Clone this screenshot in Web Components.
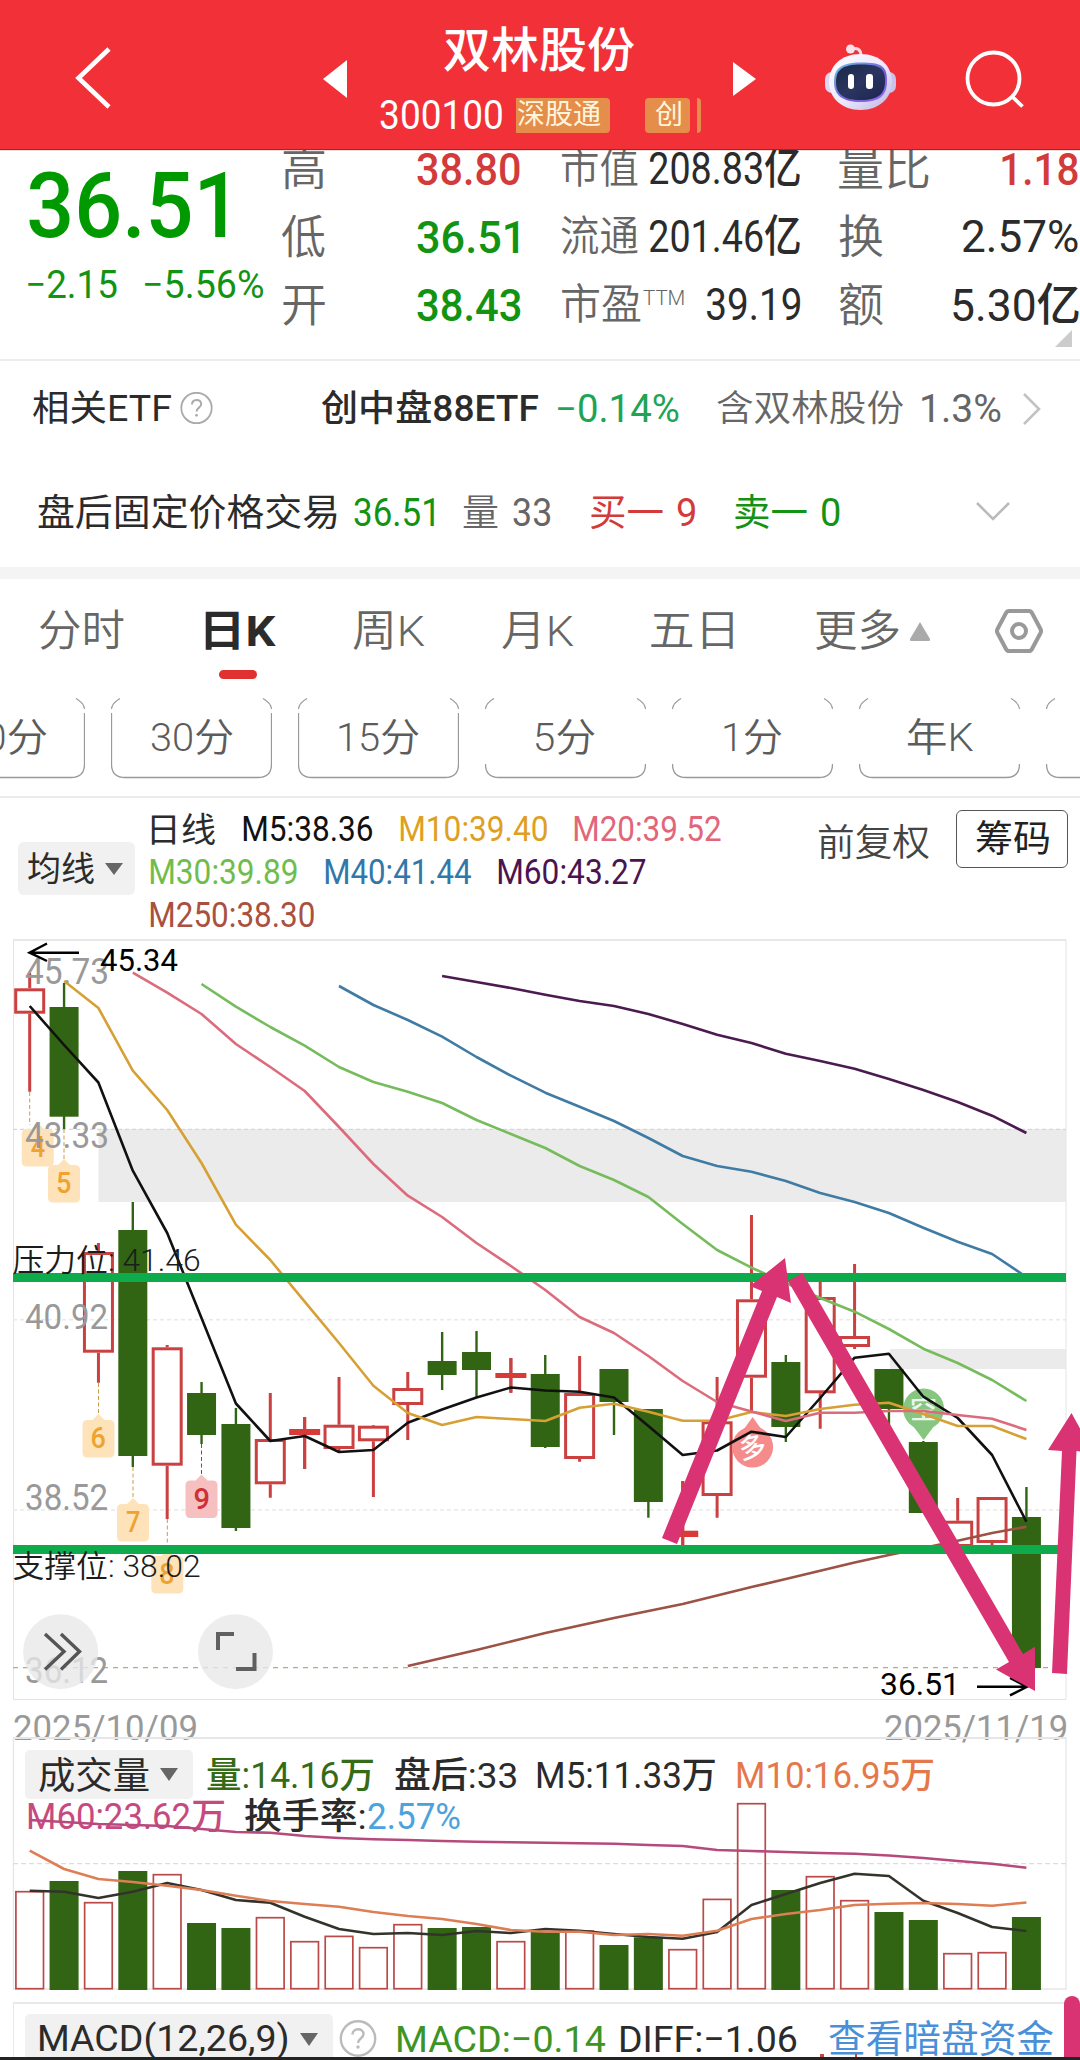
<!DOCTYPE html>
<html lang="zh-CN">
<head>
<meta charset="utf-8">
<title>双林股份 300100</title>
<style>
html,body{margin:0;padding:0;background:#fff}
body{width:1080px;height:2060px;overflow:hidden;font-family:Roboto,"Noto Sans CJK SC",sans-serif;color:#333}
</style>
</head>
<body>
<stock-page></stock-page>
<script>
const FAMILY = 'Roboto,"Noto Sans CJK SC",sans-serif';
const pen = document.createElement('canvas').getContext('2d');
// Ink bounds of a string, used to fit labels to their column widths.
function ink(text, size, weight) {
  pen.font = `${weight} ${size}px ${FAMILY}`;
  const m = pen.measureText(text);
  return { left: -m.actualBoundingBoxLeft, width: m.actualBoundingBoxRight + m.actualBoundingBoxLeft };
}
function define(name, build) {
  customElements.define(name, class extends HTMLElement {
    connectedCallback() {
      if (this.shadowRoot) return;
      this.attachShadow({ mode: 'open' }).innerHTML = build(this);
    }
  });
}

define('fit-text', el => {
  const text = el.getAttribute('text'), size = +el.getAttribute('size'), weight = +el.getAttribute('weight') || 400;
  const w = +el.getAttribute('w'), b = ink(text, size, weight), s = w / b.width;
  return `<style>:host{display:block;flex:none;width:${w}px;height:${size}px;white-space:pre}
  span{display:block;width:max-content;font:${weight} ${size}px/${size}px ${FAMILY};transform-origin:0 0;transform:translateX(${-b.left * s}px) scaleX(${s})}</style><span>${text}</span>`;
});
const tx = (x1, x2, size, color, text, weight = 400, extra = '') =>
  ({ x: x1, w: x2 - x1, html: `<fit-text text="${text}" size="${size}" weight="${weight}" w="${x2 - x1}" style="color:${color};${extra}"></fit-text>` });
const ic = (x1, x2, html) => ({ x: x1, w: x2 - x1, html });
// A flex line whose items are spaced by margins from one to the next.
function row(height, items, start = 0, extra = '') {
  let end = start;
  return `<div style="display:flex;align-items:center;height:${height}px;${extra}">` + items.map(i => {
    const g = i.x - end; end = i.x + i.w;
    return `<div style="flex:none;width:${i.w}px;margin-left:${g}px">${i.html}</div>`;
  }).join('') + '</div>';
}

define('app-header', () => `<style>
:host{display:flex;box-sizing:border-box;height:149px;padding-top:8px;align-items:center;background:#f13038;position:relative;z-index:1;box-shadow:0 1px 1px #8a3034}
svg{display:block;flex:none}
.mid{align-self:stretch;width:321px;margin:0 32px 0 33px}
.name{margin:19px 0 0 64px}
.code{display:flex;height:36px;align-items:center;margin-top:22px}
.tag{display:flex;align-items:center;height:35px;background:#e58d4a;border-radius:0 4px 4px 0}
</style>
<svg style="margin-left:70px" width="46" height="66" viewBox="0 0 46 66"><path d="M39 3 8.5 32 39 61" fill="none" stroke="#fff" stroke-width="4.6"/></svg>
<svg style="margin-left:207px" width="24" height="38" viewBox="0 0 24 38"><path d="M24 0v38L0 19z" fill="#fff"/></svg>
<div class="mid"><div class="name">${tx(444, 634, 48, '#fff', '双林股份', 500).html}</div>
<div class="code">${tx(380, 502, 41, '#fff', '300100', 450).html}
<div class="tag" style="width:92px;margin-left:14px;padding-left:2px">${tx(518, 601, 28, '#fff5dd', '深股通').html}</div>
<div class="tag" style="width:35px;margin-left:35px;padding-left:10px;border-radius:4px">${tx(655, 681, 27, '#fff5dd', '创').html}</div>
<div class="tag" style="width:4px;margin-left:7px"></div></div></div>
<svg width="23" height="34" viewBox="0 0 23 34"><path d="M0 0v34l23-17z" fill="#fff"/></svg>
<svg style="margin-left:68px" width="74" height="70" viewBox="0 0 74 70">
<defs><linearGradient id="s" x1="0" y1="0" x2="1" y2="1"><stop offset="0" stop-color="#fff"/><stop offset=".55" stop-color="#ece7fb"/><stop offset="1" stop-color="#b9b4e2"/></linearGradient>
<linearGradient id="r" x1="0" y1="0" x2="1" y2="1"><stop offset="0" stop-color="#6fc3e8"/><stop offset=".6" stop-color="#7457d8"/><stop offset="1" stop-color="#9a6ff0"/></linearGradient>
<linearGradient id="v" x1="0" y1="0" x2="1" y2="1"><stop offset="0" stop-color="#1b2a48"/><stop offset=".5" stop-color="#2a3560"/><stop offset="1" stop-color="#1b2550"/></linearGradient></defs>
<rect x="1" y="28" width="14" height="21" rx="7" fill="#ddd6f3"/><rect x="58" y="28" width="14" height="21" rx="7" fill="#c9c3ea"/>
<path d="M27 5c7-2 10 1 10 7" fill="none" stroke="#f6d9e3" stroke-width="3"/><circle cx="26.500" cy="5" r="4.500" fill="#fbe2ea"/>
<path d="M36.500 10C56 10 68 22 68 38S55 66 36.500 66 5 54 5 38 17 10 36.500 10z" fill="url(#s)"/>
<path d="M37 18.500c21 0 26 4 26 18.500s-7 21-26 21-27-7-27-20 6-19.500 27-19.500z" fill="url(#r)"/>
<path d="M37 20.500c19 0 24 4 24 16.500s-6 19-24 19-25-6-25-18 6-17.500 25-17.500z" fill="url(#v)"/>
<rect x="24" y="30" width="6" height="15" rx="3" fill="#fff"/><rect x="42" y="30" width="7" height="15" rx="3" fill="#fff"/></svg>
<svg style="margin:2px 0 0 66px" width="60" height="60" viewBox="0 0 60 60"><circle cx="29.500" cy="28.500" r="26" fill="none" stroke="#fff" stroke-width="3.800"/><path d="M47.500 46l11 10.500" stroke="#fff" stroke-width="3.800"/></svg>`);

const G = '#129312', R = '#d33a3a', L = '#666', D = '#2b2b2b';
define('quote-panel', () => `<style>
:host{display:flex;box-sizing:border-box;height:212px;border-bottom:2px solid #ececec;overflow:visible}
.px{width:253px;flex:none;padding:12px 0 0 29px}
.grid{margin-top:-14px;flex:1}
.more{position:absolute;left:1055px;top:330px}
</style>
<div class="px">${tx(29, 226, 91, '#009a00', '36.51', 500).html}<div style="height:14px"></div>${row(39, [tx(28, 117, 39, G, '−2.15', 450), tx(145, 263, 39, G, '−5.56%', 450)], 29)}</div>
<div class="grid">
${row(68, [tx(283, 325, 46, L, '高', 350), tx(417, 520, 45, R, '38.80', 500), tx(562, 638, 42, L, '市值', 350), tx(650, 800, 44, D, '208.83亿', 450), tx(839, 929, 46, L, '量比', 350), tx(1002, 1078, 45, R, '1.18', 500)], 282)}
${row(68, [tx(282, 325, 46, L, '低', 350), tx(417, 518, 45, G, '36.51', 500), tx(561, 638, 42, L, '流通', 350), tx(650, 800, 44, D, '201.46亿', 450), tx(839, 883, 46, L, '换', 350), tx(963, 1078, 44, D, '2.57%', 450)], 282)}
${row(68, [tx(283, 325, 46, L, '开', 350), tx(417, 521, 45, G, '38.43', 500), tx(562, 641, 42, L, '市盈', 350), tx(643, 684, 20, L, 'TTM', 350, 'margin-top:-14px'), tx(707, 800, 44, D, '39.19', 450), tx(839, 883, 46, L, '额', 350), tx(953, 1079, 45, D, '5.30亿', 450)], 282)}
</div>
<svg class="more" width="17" height="17"><path d="M17 0v17H0z" fill="#ccc"/></svg>`);

define('info-rows', () => `<style>:host{display:block;border-bottom:12px solid #f4f4f4}svg{display:block}</style>
${row(95, [tx(33, 171, 36, D, '相关ETF'), ic(180, 213, '<svg width="33" height="34" viewBox="0 0 33 34"><circle cx="16.500" cy="16" r="15.200" fill="none" stroke="#aaa" stroke-width="1.800"/><path d="M12 12.500c0-6 9.200-6 9.200-.6 0 3.800-4.600 3.700-4.600 7.600" fill="none" stroke="#aaa" stroke-width="2"/><circle cx="16.500" cy="23.300" r="1.400" fill="#aaa"/></svg>'),
 tx(321, 538, 36, D, '创中盘88ETF', 500), tx(558, 679, 38, '#1fa355', '−0.14%'), tx(717, 903, 36, L, '含双林股份', 350), tx(922, 1001, 38, L, '1.3%'), ic(1021, 1042, '<svg width="21" height="34"><path d="M3 2l15 15L3 32" fill="none" stroke="#c2c2c2" stroke-width="2.600"/></svg>')])}
${row(108, [tx(38, 337, 37, D, '盘后固定价格交易'), tx(354, 434, 38, G, '36.51', 450), tx(463, 498, 37, L, '量', 350), tx(513, 550, 38, L, '33'), tx(590, 663, 37, R, '买一'), tx(677, 695, 38, R, '9', 450), tx(735, 807, 37, G, '卖一'), tx(822, 840, 38, G, '0', 450), ic(975, 1011, '<svg width="36" height="22"><path d="M2 1l16 16L34 1" fill="none" stroke="#bbb" stroke-width="2.600"/></svg>')], 0, 'padding-top:3px')}`);

define('period-tabs', () => `<style>:host{display:block}svg{display:block}.bar{width:38px;height:9px;border-radius:5px;background:#e03030;margin:-10px 0 0 219px}</style>
${row(98, [tx(39, 124, 43, L, '分时', 350), tx(205, 276, 43, D, '日K', 700), tx(353, 425, 43, L, '周K', 350), tx(502, 574, 43, L, '月K', 350), tx(651, 733, 43, L, '五日', 350), tx(816, 899, 43, L, '更多', 350),
 ic(909, 931, '<svg width="22" height="19"><path d="M11 0l10 17q.5 2-1 2H2q-1.500 0-1-2z" fill="#aaa"/></svg>'),
 ic(995, 1043, '<svg width="48" height="46" viewBox="0 0 48 46"><path d="M14 3h20q2 0 3 2l8.500 16q1 2 0 4L37 41q-1 2-3 2H14q-2 0-3-2L2.500 25q-1-2 0-4L11 5q1-2 3-2z" fill="none" stroke="#999" stroke-width="4"/><circle cx="24" cy="23" r="7" fill="none" stroke="#999" stroke-width="4"/></svg>')], 0, 'padding-top:3px')}
<div class="bar"></div>`);

define('period-chip', el => {
  const open = el.hasAttribute('open'), side = open ? '' : 'M.5 15V66M160.500 15V66';
  const t = el.getAttribute('text');
  return `<style>:host{position:relative;display:flex;flex:none;width:161px;height:80px;align-items:center;justify-content:center}svg{position:absolute;left:0;top:0}</style>
  <svg width="161" height="81"><g fill="none" stroke="#999"><path d="M.5 66Q.5 79.500 14 79.500H147Q160.500 79.500 160.500 66${side}" stroke-width="1.300"/><path d="M.5 11Q1 5 9 .5M152 .5Q160 5 160.500 11" stroke-width="1.100"/></g></svg>
  ${t ? `<fit-text text="${t}" size="39" weight="350" w="${el.getAttribute('w')}" style="color:#5c5c5c"></fit-text>` : ''}`;
});
define('chip-strip', () => `<style>:host{display:flex;gap:26px;height:98px;padding-top:19px;margin-left:-76px;width:1156px;overflow:hidden;border-bottom:2px solid #ebebeb}</style>
<period-chip text="60分" w="84"></period-chip><period-chip text="30分" w="82"></period-chip><period-chip text="15分" w="80"></period-chip><period-chip text="5分" w="59" open></period-chip><period-chip text="1分" w="58" open></period-chip><period-chip text="年K" w="66" open></period-chip><period-chip open></period-chip>`);

define('ma-legend', () => `<style>:host{display:flex;height:132px;width:1080px}
.pill{display:flex;box-sizing:border-box;width:117px;height:53px;margin:44px 0 0 18px;padding-left:10px;align-items:center;background:#f1f1f1;border-radius:6px}
.pill svg{margin-left:11px}
.rows{width:669px;margin-left:15px;padding-top:10px}
.box{display:flex;box-sizing:border-box;width:112px;height:58px;border:1.500px solid #555;border-radius:6px;align-items:center;justify-content:center;margin:12px 0 0 27px}</style>
<div class="pill">${tx(28, 94, 34, D, '均线').html}<svg width="18" height="12"><path d="M0 0h18L9 12z" fill="#666"/></svg></div>
<div class="rows">
${row(43, [tx(151, 215, 34, D, '日线'), tx(243, 372, 35, '#111', 'M5:38.36', 450), tx(400, 547, 35, '#dea01f', 'M10:39.40', 450), tx(574, 721, 35, '#e2667a', 'M20:39.52', 450)], 150)}
${row(43, [tx(150, 297, 35, '#6fbd4c', 'M30:39.89', 450), tx(325, 471, 35, '#3178a8', 'M40:41.44', 450), tx(498, 646, 35, '#4a1450', 'M60:43.27', 450)], 150)}
${row(43, [tx(150, 314, 35, '#a95140', 'M250:38.30', 450)], 150)}</div>
<div style="margin-top:27px">${tx(819, 929, 37, '#444', '前复权', 350).html}</div>
<div class="box">${tx(975, 1048, 37, '#222', '筹码').html}</div>`);

const cx = i => 29.7 + 34.37 * i;
const label = (x1, x2, y, size, fill, text, weight = 400) => {
  const b = ink(text, size, weight), s = (x2 - x1) / b.width;
  return `<text transform="translate(${x1 - b.left * s} ${y}) scale(${s} 1)" font-size="${size}" font-weight="${weight}" fill="${fill}">${text}</text>`;
};
const line = (color, from, ys, w = 2.6) => `<polyline fill="none" stroke="${color}" stroke-width="${w}" stroke-linejoin="round" points="${ys.map((y, k) => cx(from + k).toFixed(1) + ',' + y).join(' ')}"/>`;
const dash = (y, c, p, w = 1.6) => `<path d="M13 ${y}H1066" stroke="${c}" stroke-width="${w}" stroke-dasharray="${p}"/>`;
const RED = '#cb4040', GREEN = '#316514';

define('price-chart', () => {
  // [up?, high, body top, body bottom, low]
  const K = [[1,973,988.3,1013.7,1091.7],[0,983,1007,1116.7,1129],[1,1243,1252,1352.7,1382.7],[0,1202,1230,1456,1467],[1,1345,1347.3,1465.7,1519],[0,1382,1393,1435,1444],[0,1408,1424,1528,1531],[1,1393,1439,1484.3,1497.7],[1,1417,1429,1435,1469],[1,1377,1424.7,1449,1451.7],[1,1425,1425.7,1441.3,1497],[1,1372,1388,1405,1440],[0,1332,1361,1375,1390],[0,1331,1352,1370,1397],[1,1358,1373,1378,1392.7],[0,1355,1374,1447,1448],[1,1356,1393,1459,1461.7],[0,1369,1369,1402,1435],[0,1409,1409,1502,1517.7],[1,1481,1530.7,1537,1546],[1,1377,1421.3,1496,1517.7],[1,1215,1299.3,1377.7,1412],[0,1355,1362,1427,1442],[1,1276,1297,1393.3,1428.7],[1,1264,1336,1347,1349],[0,1369,1369,1409,1450],[0,1441,1442,1513,1513],[1,1498,1520.7,1547,1549],[1,1497,1497,1543,1546],[0,1487,1517,1668,1668]];
  const candles = K.map(([up, h, t, b, l], i) => {
    const x = cx(i);
    if (!up) return `<path d="M${x} ${h}V${l}" stroke="${GREEN}" stroke-width="2.400"/><rect x="${x - 14.5}" y="${t}" width="29" height="${b - t}" fill="${GREEN}"/>`;
    const wick = `<path d="M${x} ${h}V${t}M${x} ${b}V${l}" stroke="${RED}" stroke-width="3"/>`;
    return b - t < 8 ? wick + `<path d="M${x} ${h}V${l}" stroke="${RED}" stroke-width="3"/><rect x="${x - 15.5}" y="${t}" width="31" height="${b - t}" fill="#d83a38"/>` : wick + `<rect x="${x - 14}" y="${t + 1.5}" width="28" height="${b - t - 3}" fill="none" stroke="${RED}" stroke-width="3"/>`;
  }).join('');
  const tag = (x, y, n, fill, ink2, from, dx = 0) => `<path d="M${x} ${from}V${y - 4}" stroke="${n == 9 ? '#a04040' : '#c79d4c'}" stroke-width="1" stroke-dasharray="4 2.500"/><path d="M${x + dx} ${y - 6}l6 6h5q5 0 5 5v27.500q0 5-5 5h-22q-5 0-5-5V${y + 5}q0-5 5-5h5z" fill="${fill}"/>${label(x + dx - 7, x + dx + 7, y + 28, 29, ink2, n, 500)}`;
  const O = '#fee3ba', OT = '#eea230', A = '#999';
  return `<style>:host{display:block;height:808px}svg{display:block;overflow:visible}text{font-family:${FAMILY}}</style>
<svg width="1080" height="808" viewBox="0 930 1080 808">
<rect x="98.500" y="1129" width="967.500" height="73" fill="#ebebeb"/><rect x="890" y="1349" width="176" height="20" fill="#ebebeb"/>
<path d="M13 940H1066" stroke="#e8e8e8" stroke-width="2"/><path d="M13.500 940V1699.500H1066V940" fill="none" stroke="#e4e4e4"/>
${dash(1129.3, '#d6d6d6', '4 3', 1.2)}${dash(1319.7, '#e9e9e9', '4 3')}${dash(1510, '#e9e9e9', '4 3')}${dash(1667.7, '#c0a678', '5 5', 1.3)}
${tag(29.7, 1129, '4', O, OT, 1092, 8)}${tag(64, 1165, '5', O, OT, 1129)}${tag(98.5, 1420, '6', O, OT, 1383)}${tag(133, 1504, '7', O, OT, 1467)}${tag(167.3, 1556, '8', O, OT, 1519)}${tag(201.5, 1480.5, '9', '#f6bfc0', '#cf3036', 1444)}
${candles}
${label(25, 107, 983.5, 36, A, '45.73', 450)}${label(25, 107, 1147.7, 36, A, '43.33', 450)}${label(25, 107, 1329, 36, A, '40.92', 450)}${label(26, 107, 1510, 36, A, '38.52', 450)}${label(26, 107, 1682.7, 36, A, '36.12', 450)}
<circle cx="752.600" cy="1447" r="20.500" fill="#f58b8a"/><path d="M744 1429l8.600-12 8.600 12z" fill="#f58b8a"/><g transform="rotate(-12 752 1447)">${label(740, 765, 1457, 27, '#fff', '多', 500)}</g>
<circle cx="923.600" cy="1409" r="20.500" fill="#86c680"/><path d="M913 1426l10.600 14 10.600-14z" fill="#86c680"/><g opacity=".85">${label(911, 936, 1419, 27, '#fff', '空', 500)}</g>
${line('#4b1a4f', 12, [976,982,988,994.7,1001,1006,1014,1024,1034.7,1043,1053.7,1061,1068.7,1079,1090,1102,1115.7,1133])}
${line('#3f7ba3', 9, [986,1005,1020,1036.7,1057,1075.7,1092.7,1106.7,1121,1138,1156,1166,1171.7,1181,1193,1202,1213,1227.7,1241.7,1254,1277])}
${line('#76bb5c', 5, [984,1006.7,1027,1045.7,1067,1082,1091.7,1103,1120,1134,1148,1166,1180,1197,1224,1250,1267.7,1283,1298,1311.7,1329,1348.7,1363,1380,1401])}
${line('#9c5245', 11, [1666,1658,1650,1641.5,1633,1625.5,1618,1611,1604,1595.5,1587,1579,1570.7,1562.5,1555,1548,1540.7,1533,1526.7])}
${line('#111', 0, [1006,1045,1082.5,1170.7,1233,1318,1403.5,1441,1436,1452,1450,1422.7,1409.5,1397.6,1387.5,1390.5,1391.7,1397.5,1426,1455,1450.5,1431.7,1437,1398,1357.7,1353.7,1396.7,1418,1455,1521.7])}
${line('#d6a035', 1, [981,1008,1070.7,1110,1163,1224.7,1260,1301.7,1343,1385.7,1413,1425,1417,1419,1421,1407.7,1403.7,1411.7,1420.7,1420.7,1412,1416,1409,1404.7,1402.7,1414,1426,1426,1439])}
${line('#dc6b7c', 3, [972.7,992.7,1014,1044,1067,1091,1127,1164,1195.7,1217,1243,1266,1290,1317,1333,1356,1381,1402,1411.5,1421,1412.7,1412.7,1411,1411,1415,1418.7,1430])}
<path d="M79 952.700H30M47 943.500L29.500 952.700 47 961" fill="none" stroke="#000" stroke-width="2.400"/>
${label(100, 178, 971.3, 32, '#000', '45.34')}${label(881, 954, 1695, 32, '#000', '36.51')}
<path d="M977 1686.700H1026M1010 1678l17 8.700-17 8.700" fill="none" stroke="#000" stroke-width="2.400"/>
<path d="M13 1277.400H1066M13 1549.500H1066" stroke="#0eab4d" stroke-width="9"/>
${label(13.5, 199.5, 1270.5, 31, '#1c1c1c', '压力位: 41.46', 350)}${label(13.5, 199.5, 1577, 31, '#1c1c1c', '支撑位: 38.02', 350)}
<g fill="#da3373"><path d="M662 1538L762 1291l-12-5 35-28 6 45-14-6-100 247z"/><path d="M788 1281l14.500-8L1023 1654l12-7.300V1691l-39-21.500 13-7.500z"/><path d="M1052 1673l10-222-14-1 23.500-37 22 40-17-2-9.500 223z"/></g>
<g fill="#e8e8e8" fill-opacity=".78"><circle cx="60.600" cy="1651.700" r="37.500"/><circle cx="235.500" cy="1651.700" r="37.500"/></g>
<path d="M45 1634l19 17.500-19 18M61 1634l18.500 17.500-18.500 18" fill="none" stroke="#555" stroke-width="3.400"/>
<path d="M218 1650v-16h16M236 1669h18.500v-16" fill="none" stroke="#606060" stroke-width="4"/>
${label(14, 196, 1739.5, 36, A, '2025/10/09', 450)}${label(885, 1066, 1739.5, 36, A, '2025/11/19', 450)}
</svg>`;
});

define('volume-chart', () => {
  const up = '101010011111001010011101100110', top = [1891,1881,1902,1871,1874,1923,1928,1917,1941,1935.7,1947,1924,1928,1927,1941,1932,1930.3,1945,1937.3,1949,1898.7,1803,1890,1876,1900,1912,1920,1953,1952,1917];
  const bars = top.map((t, i) => up[i] === '1'
    ? `<rect x="${cx(i) - 13.8}" y="${t + .7}" width="27.600" height="${1989 - t - 1}" fill="none" stroke="#b94a48" stroke-width="1.700"/>`
    : `<rect x="${cx(i) - 14.5}" y="${t}" width="29" height="${1990 - t}" fill="${GREEN}"/>`).join('');
  return `<style>:host{display:block;height:264px}svg{display:block;overflow:visible}text{font-family:${FAMILY}}</style>
<svg width="1080" height="264" viewBox="0 1738 1080 264">
<path d="M13 1738H1066" stroke="#e6e6e6" stroke-width="2"/><path d="M13.500 1738V1989H1066V1738" fill="none" stroke="#e6e6e6" stroke-width="1.300"/>
${dash(1863.7, '#ddd', '5 3', 1.3)}
<rect x="25" y="1750" width="168" height="49" rx="5" fill="#f1f1f1"/>
${bars}
${label(39, 149, 1789, 37, D, '成交量')}<path d="M160 1768h18l-9 13z" fill="#666"/>
${label(207, 373, 1788, 36, '#356a16', '量:14.16万', 450)}${label(395, 516, 1788, 36, D, '盘后:33', 450)}${label(537, 715, 1788, 36, D, 'M5:11.33万', 450)}${label(737, 933, 1788, 36, '#e5784a', 'M10:16.95万', 450)}
${label(28, 224, 1829, 36, '#c74a7f', 'M60:23.62万', 450)}${label(245, 365, 1829, 36, D, '换手率:', 450)}${label(368, 460, 1829, 37, '#4ba3dd', '2.57%', 450)}
${line('#b64a7d', 0, [1820,1822,1824,1825,1826,1829,1832,1832.7,1836,1838,1839.3,1840,1841,1841.7,1842.2,1842.7,1843.3,1843.7,1845,1846,1850,1851,1852,1853,1853.7,1855.5,1858,1861,1863.7,1867.7])}
${line('#33332c', 0, [1890.7,1891.7,1898,1891.7,1883,1890,1900,1902.7,1916.7,1929,1934,1933,1935,1931,1933,1929,1930.7,1934,1937,1938.7,1932,1905,1894,1883,1873.7,1876,1900.7,1913,1927,1931])}
${line('#dd7e54', 0, [1850.7,1869,1879,1882,1885.7,1890,1895.7,1901,1904,1906.7,1912,1916,1919,1924,1930,1931.7,1931.7,1935,1934,1935.7,1930.7,1919,1914,1910,1905,1903.7,1903,1904,1905.7,1902.5])}
</svg>`;
});

define('macd-bar', () => `<style>
:host{display:block;position:relative;box-sizing:border-box;height:58px;overflow:visible;margin-left:13px;width:1053px;border-top:2px solid #e9e9e9;border-left:1px solid #e9e9e9}
.pill{display:flex;align-items:center;width:308px;height:50px;padding-left:14px;box-sizing:border-box;background:#f1f1f1;border-radius:5px 5px 0 0}
.pill svg{margin-left:13px}
.foot{position:absolute;left:-14px;top:53px;width:1080px;height:3px;background:#232323}
.grip{position:absolute;left:1050px;top:-8px;width:16px;height:64px;border-radius:8px 8px 0 0;background:#da3373}
.dots{position:absolute;left:806px;top:50px}
svg{display:block}</style>
${row(50, [ic(25, 333, `<div class="pill">${tx(39, 287, 36, D, 'MACD(12,26,9)', 450).html}<svg width="18" height="13"><path d="M0 0h18L9 13z" fill="#666"/></svg></div>`),
 ic(339, 377, '<svg width="38" height="38" viewBox="0 0 38 38"><circle cx="19" cy="18.500" r="17.200" fill="none" stroke="#bbb" stroke-width="2.400"/><path d="M13.500 14.500c0-7 11-7 11-.5 0 4.500-5.500 4.400-5.500 9" fill="none" stroke="#bbb" stroke-width="2.400"/><circle cx="19" cy="27" r="1.700" fill="#bbb"/></svg>'),
 tx(398, 605, 37, '#3d9423', 'MACD:−0.14', 450), tx(621, 797, 37, D, 'DIFF:−1.06', 450), tx(829, 1053, 38, '#4a90d9', '查看暗盘资金')], 14, 'margin-top:10px')}
<svg class="dots" width="40" height="4"><path d="M0 0h4v3H0zM35 0h2v3h-2z" fill="#b94a48"/></svg>
<div class="grip"></div><div class="foot"></div>`);

define('stock-page', () => `<style>:host{display:flex;flex-direction:column;width:1080px;height:2060px;overflow:hidden;background:#fff}:host>*{flex:none}</style>
<app-header></app-header><quote-panel></quote-panel><info-rows></info-rows><period-tabs></period-tabs><chip-strip></chip-strip><ma-legend></ma-legend><price-chart></price-chart><volume-chart></volume-chart><macd-bar></macd-bar>`);
</script>
</body>
</html>
